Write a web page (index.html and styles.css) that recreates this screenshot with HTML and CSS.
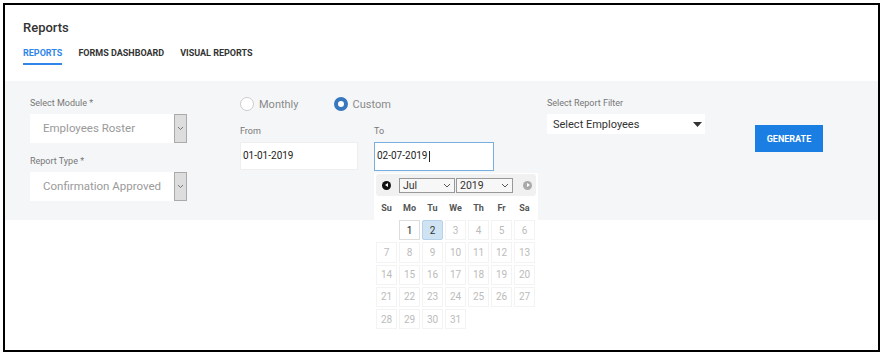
FILE: index.html
```html
<!DOCTYPE html>
<html lang="en">
<head>
  <meta charset="UTF-8">
  <title>Reports</title>
  <link rel="stylesheet" href="styles.css">
</head>
<body>
<div class="frame">
  <div class="head">
    <h1 class="head__title">Reports</h1>
    <div class="tabs">
      <a class="tabs__item tabs__item--active">REPORTS</a>
      <a class="tabs__item">FORMS DASHBOARD</a>
      <a class="tabs__item">VISUAL REPORTS</a>
    </div>
  </div>

  <div class="panel">
    <div class="col col--module">
      <label class="field-label">Select Module *</label>
      <div class="select">
        <span class="select__text">Employees Roster</span>
        <span class="select__btn"><svg width="7" height="5" viewBox="0 0 7 5"><path d="M1 1l2.5 2.5L6 1" fill="none" stroke="#777" stroke-width="1"/></svg></span>
      </div>
      <label class="field-label field-label--gap">Report Type *</label>
      <div class="select">
        <span class="select__text">Confirmation Approved</span>
        <span class="select__btn"><svg width="7" height="5" viewBox="0 0 7 5"><path d="M1 1l2.5 2.5L6 1" fill="none" stroke="#777" stroke-width="1"/></svg></span>
      </div>
    </div>

    <div class="col col--dates">
      <div class="radios">
        <label class="radio"><span class="radio__dot"></span>Monthly</label>
        <label class="radio"><span class="radio__dot radio__dot--on"></span>Custom</label>
      </div>
      <div class="dates">
        <div class="date date--from">
          <label class="field-label">From</label>
          <div class="date__input">01-01-2019</div>
        </div>
        <div class="date date--to">
          <label class="field-label">To</label>
          <div class="date__input date__input--focus">02-07-2019<span class="caret"></span></div>

          <div class="picker">
            <div class="picker__head">
              <span class="picker__nav picker__nav--prev"></span>
              <span class="picker__sel picker__sel--month">Jul<svg width="8" height="5" viewBox="0 0 8 5"><path d="M1 1l3 3 3-3" fill="none" stroke="#555"/></svg></span>
              <span class="picker__sel picker__sel--year">2019<svg width="8" height="5" viewBox="0 0 8 5"><path d="M1 1l3 3 3-3" fill="none" stroke="#555"/></svg></span>
              <span class="picker__nav picker__nav--next"></span>
            </div>
            <div class="picker__days">
              <span>Su</span><span>Mo</span><span>Tu</span><span>We</span><span>Th</span><span>Fr</span><span>Sa</span>
            </div>
            <div class="picker__grid">
              <span class="empty"></span>
              <span class="day day--on">1</span>
              <span class="day day--sel">2</span>
              <span class="day">3</span><span class="day">4</span><span class="day">5</span><span class="day">6</span>
              <span class="day">7</span><span class="day">8</span><span class="day">9</span><span class="day">10</span><span class="day">11</span><span class="day">12</span><span class="day">13</span>
              <span class="day">14</span><span class="day">15</span><span class="day">16</span><span class="day">17</span><span class="day">18</span><span class="day">19</span><span class="day">20</span>
              <span class="day">21</span><span class="day">22</span><span class="day">23</span><span class="day">24</span><span class="day">25</span><span class="day">26</span><span class="day">27</span>
              <span class="day">28</span><span class="day">29</span><span class="day">30</span><span class="day">31</span>
            </div>
          </div>
        </div>
      </div>
    </div>

    <div class="col col--filter">
      <label class="field-label">Select Report Filter</label>
      <div class="filter">
        <span>Select Employees</span>
        <svg width="9" height="5" viewBox="0 0 9 5"><path d="M0 0h9L4.5 5z" fill="#333"/></svg>
      </div>
    </div>

    <div class="col col--action">
      <button class="btn">GENERATE</button>
    </div>
  </div>
</div>
</body>
</html>
```

FILE: styles.css
```css
* {
  box-sizing: border-box;
}
body {
  margin: 0;
  background: #fff;
  font-family: Roboto, 'Liberation Sans', Arial, sans-serif;
  color: #333;
}
.frame {
  margin: 3px 0 0 3px;
  width: 877px;
  height: 349px;
  border: 2px solid #000;
}
.head {
  padding: 15px 0 0 18px;
  height: 76px;
}
.head__title {
  margin: 0;
  font-size: 13px;
  font-weight: 500;
  line-height: 16px;
  color: #333;
}
.tabs {
  display: flex;
  gap: 16px;
  margin-top: 12px;
}
.tabs__item {
  font-size: 9px;
  font-weight: 700;
  color: #333;
  padding-bottom: 4px;
  border-bottom: 2px solid transparent;
  line-height: 11px;
}
.tabs__item--active {
  color: #2f86e8;
  border-bottom-color: #2f86e8;
}
.panel {
  display: flex;
  background: #f5f6f8;
  height: 139px;
  padding: 16px 0 0 25px;
}
.col {
  display: flex;
  flex-direction: column;
}
.col--module {
  width: 210px;
}
.col--dates {
  width: 307px;
}
.col--filter {
  width: 208px;
}
.col--action {
  padding-top: 28px;
}
.field-label {
  font-size: 9px;
  line-height: 12px;
  color: #777;
  margin-bottom: 5px;
}
.field-label--gap {
  margin-top: 12px;
}
.select {
  display: flex;
  width: 157px;
  height: 29px;
  background: #fff;
}
.select__text {
  flex: 1;
  padding-left: 13px;
  font-size: 11.5px;
  line-height: 29px;
  color: #9a9a9a;
}
.select__btn {
  width: 13px;
  background: #ddd;
  border: 1px solid #aaa;
  display: flex;
  align-items: center;
  justify-content: center;
}
.radios {
  display: flex;
  gap: 35px;
  height: 14px;
}
.radio {
  display: flex;
  align-items: center;
  gap: 5px;
  font-size: 11px;
  color: #8a8a8a;
}
.radio__dot {
  width: 14px;
  height: 14px;
  border-radius: 50%;
  border: 1px solid #ccc;
  background: #fff;
}
.radio__dot--on {
  border: 4px solid #3777be;
}
.dates {
  display: flex;
  gap: 16px;
  margin-top: 14px;
}
.date {
  position: relative;
  display: flex;
  flex-direction: column;
}
.date--from {
  width: 118px;
}
.date--to {
  width: 120px;
}
.date__input {
  height: 28px;
  background: #fff;
  border: 1px solid #eee;
  padding-left: 2px;
  font-size: 10px;
  line-height: 26px;
  color: #222;
}
.date__input--focus {
  height: 29px;
  border: 1px solid #77aee0;
}
.caret {
  display: inline-block;
  width: 1px;
  height: 11px;
  background: #222;
  vertical-align: middle;
  margin-left: 1px;
}
.picker {
  position: absolute;
  top: 48px;
  left: 0;
  width: 164px;
  padding: 1px 2px;
  background: #fff;
}
.picker__head {
  display: flex;
  align-items: center;
  height: 22px;
  background: #f1f1f1;
  border-radius: 3px;
  padding: 0 4px 0 6px;
}
.picker__nav {
  width: 9px;
  height: 9px;
  border-radius: 50%;
  background: #111;
  position: relative;
}
.picker__nav::after {
  content: '';
  position: absolute;
  top: 2.5px;
  border-top: 2px solid transparent;
  border-bottom: 2px solid transparent;
}
.picker__nav--prev::after {
  left: 2.5px;
  border-right: 3px solid #fff;
}
.picker__nav--next {
  background: #aaa;
  margin-left: auto;
}
.picker__nav--next::after {
  left: 3.5px;
  border-left: 3px solid #fff;
}
.picker__sel {
  display: flex;
  align-items: center;
  justify-content: space-between;
  height: 15px;
  border: 1px solid #999;
  background: #f7f7f7;
  font-size: 10.5px;
  color: #333;
  padding: 0 3px;
}
.picker__sel--month {
  width: 56px;
  margin-left: 8px;
}
.picker__sel--year {
  width: 57px;
  margin-left: 1px;
}
.picker__days {
  display: grid;
  grid-template-columns: repeat(7, 21px);
  column-gap: 2px;
  height: 24px;
  align-items: center;
  justify-items: center;
  font-size: 9px;
  font-weight: 700;
  color: #555;
}
.picker__grid {
  display: grid;
  grid-template-columns: repeat(7, 21px);
  grid-auto-rows: 20.25px;
  gap: 2px;
}
.day {
  display: flex;
  align-items: center;
  justify-content: center;
  border: 1px solid #f3f3f3;
  font-size: 10px;
  color: #bbb;
}
.day--on {
  color: #222;
  border-color: #ddd;
}
.day--sel {
  color: #333;
  background: #cfe3f3;
  border-color: #b6d2ea;
  border-radius: 2px;
}
.filter {
  display: flex;
  align-items: center;
  justify-content: space-between;
  width: 158px;
  height: 20px;
  background: #fff;
  padding: 0 3px 0 6px;
  font-size: 11px;
  color: #333;
}
.btn {
  width: 68px;
  height: 27px;
  border: 0;
  background: #1a7ee3;
  color: #fff;
  font-family: inherit;
  font-size: 9px;
  font-weight: 700;
  padding: 0;
}
```
